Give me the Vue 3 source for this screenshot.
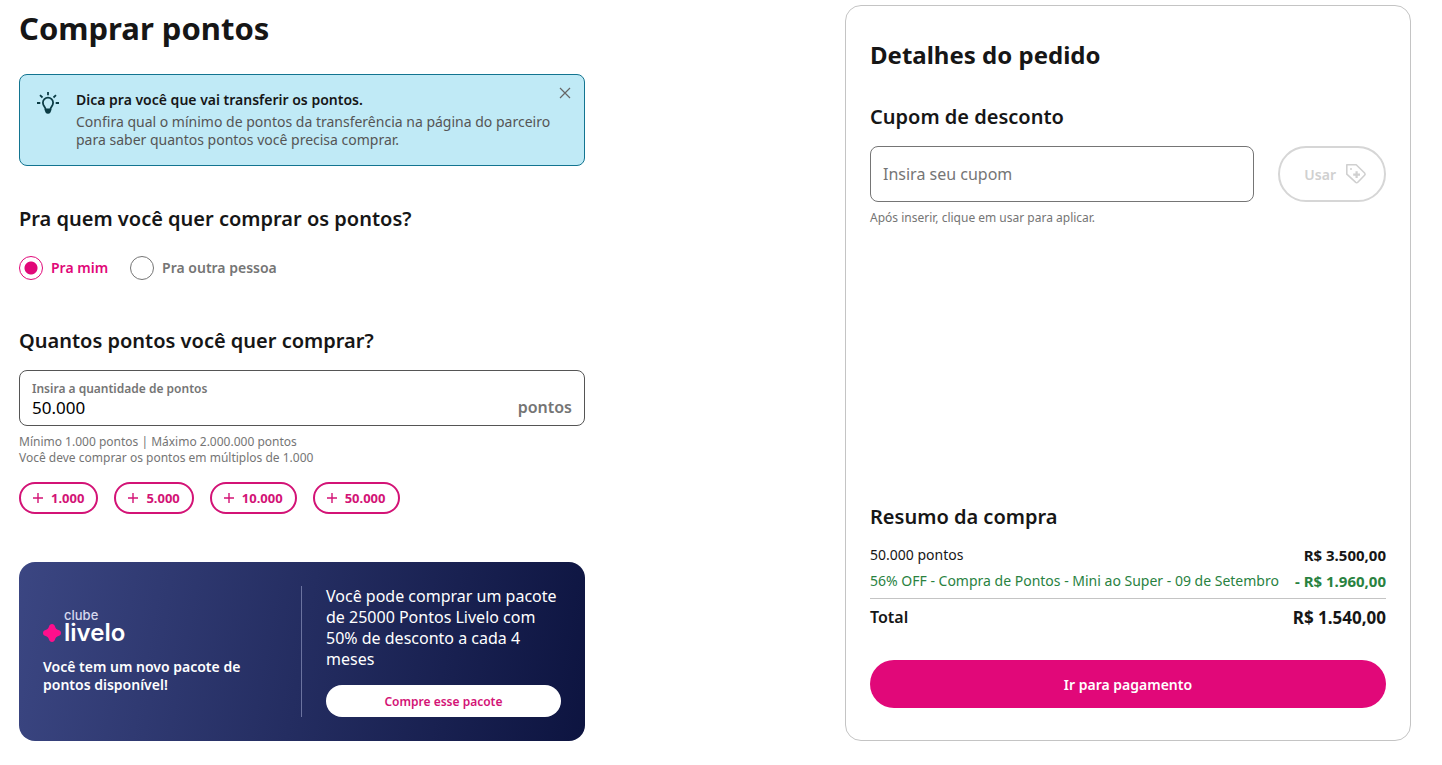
<template>
  <main class="checkout">
    <section class="purchase">
      <h1 class="page-title">Comprar pontos</h1>

      <div v-if="showTip" class="tip" role="note">
        <svg class="tip-icon" width="24" height="24" viewBox="0 0 24 24" fill="none" stroke="currentColor" stroke-width="1.8">
          <path d="M12 1v3.200M4 4.200l2.500 2.300M20 4.200l-2.500 2.300M1 12h3.300M19.700 12H23"/>
          <path d="M9.600 18.400c0-2-2.700-3.600-2.700-6.700a5.100 5.100 0 0 1 10.200 0c0 3.100-2.700 4.700-2.700 6.700z"/>
          <path d="M8.700 18h6.600c0 3-1.200 4.800-3.300 4.800s-3.300-1.800-3.300-4.800z" fill="currentColor" stroke="none"/>
        </svg>
        <div class="tip-text">
          <strong>Dica pra você que vai transferir os pontos.</strong>
          <p>Confira qual o mínimo de pontos da transferência na página do parceiro para saber quantos pontos você precisa comprar.</p>
        </div>
        <button type="button" class="tip-close" aria-label="Fechar" @click="showTip = false">
          <svg width="12" height="12" viewBox="0 0 12 12" fill="none" stroke="currentColor" stroke-width="1.2">
            <path d="M1 1l10 10M11 1L1 11"/>
          </svg>
        </button>
      </div>

      <h2 id="recipient-title" class="section-title recipient-title">Pra quem você quer comprar os pontos?</h2>
      <div class="radios" role="radiogroup" aria-labelledby="recipient-title">
        <label v-for="option in recipients" :key="option.value" class="radio" :class="{ 'selected': recipient === option.value }">
          <input v-model="recipient" type="radio" name="recipient" :value="option.value">
          {{ option.label }}
        </label>
      </div>

      <h2 class="section-title amount-title">Quantos pontos você quer comprar?</h2>
      <div class="amount-field">
        <div class="amount-main">
          <label for="amount">Insira a quantidade de pontos</label>
          <input id="amount" type="text" inputmode="numeric" :value="format(points)" @change="updatePoints">
        </div>
        <span class="amount-unit">pontos</span>
      </div>
      <p class="hint">
        Mínimo 1.000 pontos | Máximo 2.000.000 pontos<br>
        Você deve comprar os pontos em múltiplos de 1.000
      </p>

      <div class="chips">
        <button v-for="step in steps" :key="step" type="button" class="chip" @click="addPoints(step)">
          <svg width="10" height="10" viewBox="0 0 10 10" fill="none" stroke="currentColor" stroke-width="1.4">
            <path d="M5 0v10M0 5h10"/>
          </svg>
          {{ format(step) }}
        </button>
      </div>

      <div class="club">
        <div class="club-brand">
          <div class="logo">
            <svg width="18" height="20" viewBox="0 0 18 18" fill="#ff0f8c">
              <path d="M9 0c1.600 0 2.600.9 3 2.500.5 1.900 1.600 3 3.500 3.500C17.100 6.400 18 7.400 18 9s-.9 2.600-2.500 3c-1.900.5-3 1.600-3.500 3.500-.4 1.600-1.400 2.500-3 2.500s-2.600-.9-3-2.500C5.500 13.600 4.400 12.500 2.500 12 .9 11.600 0 10.600 0 9s.9-2.600 2.500-3C4.400 5.500 5.500 4.400 6 2.500 6.400.9 7.400 0 9 0z"/>
            </svg>
            <div class="logo-text">
              <span class="logo-club">clube</span>
              <span class="logo-name">livelo</span>
            </div>
          </div>
          <p>Você tem um novo pacote de pontos disponível!</p>
        </div>
        <div class="club-offer">
          <p>Você pode comprar um pacote de 25000 Pontos Livelo com 50% de desconto a cada 4 meses</p>
          <button type="button">Compre esse pacote</button>
        </div>
      </div>
    </section>

    <aside class="order">
      <h2 class="order-title">Detalhes do pedido</h2>

      <h3 class="section-title coupon-title"><label for="coupon">Cupom de desconto</label></h3>
      <form class="coupon" @submit.prevent>
        <input id="coupon" v-model="coupon" type="text" placeholder="Insira seu cupom">
        <button type="submit" :disabled="!coupon">
          Usar
          <svg width="24" height="24" viewBox="0 0 24 24" fill="none" stroke="currentColor" stroke-width="1.6" stroke-linejoin="round">
            <path d="M2.800 2.800h9.400l8.400 8.200a1.600 1.600 0 0 1 0 2.200l-6.800 7a1.600 1.600 0 0 1-2.300 0l-8.700-8z"/>
            <path d="M12.600 9.200v6.800M9.200 12.600h6.800" stroke-width="2.2"/>
            <circle cx="7" cy="7" r="1" fill="currentColor" stroke="none"/>
          </svg>
        </button>
      </form>
      <p class="hint">Após inserir, clique em usar para aplicar.</p>

      <div class="summary">
        <h3 class="section-title">Resumo da compra</h3>
        <dl>
          <div class="line">
            <dt>{{ format(points) }} pontos</dt>
            <dd>{{ money(subtotal) }}</dd>
          </div>
          <div class="line discount">
            <dt>56% OFF - Compra de Pontos - Mini ao Super - 09 de Setembro</dt>
            <dd>- {{ money(discount) }}</dd>
          </div>
          <div class="line total">
            <dt>Total</dt>
            <dd>{{ money(subtotal - discount) }}</dd>
          </div>
        </dl>
        <button type="button" class="pay">Ir para pagamento</button>
      </div>
    </aside>
  </main>
</template>

<script setup>
import { ref, computed } from 'vue'

const MIN_POINTS = 1000
const MAX_POINTS = 2000000

const showTip = ref(true)
const recipient = ref('me')
const points = ref(50000)
const coupon = ref('')

const recipients = [
  { value: 'me', label: 'Pra mim' },
  { value: 'other', label: 'Pra outra pessoa' }
]
const steps = [1000, 5000, 10000, 50000]

// R$ 70,00 for every 1.000 points
const subtotal = computed(() => points.value * 0.07)
const discount = computed(() => subtotal.value * 0.56)

const format = (value) => String(value).replace(/\B(?=(\d{3})+$)/g, '.')

const money = (value) => {
  const [whole, cents] = value.toFixed(2).split('.')
  return `R$ ${format(whole)},${cents}`
}

const setPoints = (value) => {
  points.value = Math.min(MAX_POINTS, Math.max(MIN_POINTS, value))
}

const addPoints = (step) => setPoints(points.value + step)

const updatePoints = (event) => {
  const value = Number(event.target.value.replace(/\D/g, ''))
  setPoints(Math.round(value / 1000) * 1000)
  event.target.value = format(points.value)
}
</script>

<style>
body {
  margin: 0;
  background: #fff;
}
</style>

<style scoped>
.checkout {
  display: grid;
  grid-template-columns: 1fr 1fr;
  column-gap: 260px;
  padding: 5px 31px 24px 19px;
  font-family: "Noto Sans", "Open Sans", sans-serif;
  color: #161616;
}

h1, h2, h3, p, dl, dd {
  margin: 0;
}

button, input {
  font-family: inherit;
  box-sizing: border-box;
}

button {
  cursor: pointer;
}

.purchase {
  padding-top: 3px;
}

.page-title {
  font-size: 31px;
  line-height: 40px;
  font-weight: 700;
}

.section-title {
  font-size: 20px;
  line-height: 26px;
  font-weight: 600;
}

/* Dica */
.tip {
  display: flex;
  align-items: flex-start;
  margin-top: 26px;
  padding: 16px 13px 16px 16px;
  border: 1px solid #127490;
  border-radius: 8px;
  background: #c0eaf6;
}

.tip-icon {
  flex: none;
  color: #0b3c45;
}

.tip-text {
  flex: 1;
  margin-left: 16px;
  font-size: 14px;
  line-height: 18px;
}

.tip-text strong {
  display: block;
  font-weight: 600;
}

.tip-text p {
  margin-top: 4px;
  color: #555;
}

.tip-close {
  display: flex;
  margin-top: -4px;
  padding: 0;
  border: none;
  background: none;
  color: #666;
}

/* Destinatário */
.recipient-title {
  margin-top: 40px;
}

.radios {
  display: flex;
  gap: 22px;
  margin-top: 24px;
}

.radio {
  display: flex;
  align-items: center;
  gap: 8px;
  font-size: 14px;
  line-height: 24px;
  font-weight: 600;
  color: #757575;
  cursor: pointer;
}

.radio input {
  appearance: none;
  width: 24px;
  height: 24px;
  margin: 0;
  border: 1px solid #757575;
  border-radius: 50%;
  background: #fff;
}

.radio.selected {
  color: #e10879;
}

.radio.selected input {
  border-color: #e10879;
  background: radial-gradient(circle, #e10879 6px, #fff 7px);
}

/* Quantidade */
.amount-title {
  margin-top: 48px;
}

.amount-field {
  display: flex;
  align-items: flex-end;
  box-sizing: border-box;
  height: 56px;
  margin-top: 16px;
  padding: 8px 12px;
  border: 1px solid #555;
  border-radius: 8px;
}

.amount-main {
  flex: 1;
  display: flex;
  flex-direction: column;
}

.amount-main label {
  font-size: 12px;
  line-height: 16px;
  font-weight: 600;
  color: #757575;
}

.amount-main input {
  width: 100%;
  height: 20px;
  padding: 0;
  border: none;
  outline: none;
  background: none;
  font-size: 17px;
  color: #000;
}

.amount-unit {
  font-size: 16px;
  line-height: 20px;
  font-weight: 600;
  color: #757575;
}

.hint {
  margin-top: 8px;
  font-size: 12px;
  line-height: 16px;
  color: #757575;
}

.chips {
  display: flex;
  gap: 16px;
  margin-top: 16px;
}

.chip {
  display: flex;
  align-items: center;
  gap: 8px;
  height: 32px;
  padding: 0 12px;
  border: 2px solid #d31376;
  border-radius: 16px;
  background: #fff;
  font-size: 13px;
  font-weight: 700;
  color: #d31376;
}

/* Clube */
.club {
  display: grid;
  grid-template-columns: 1fr 1fr;
  margin-top: 48px;
  padding: 24px;
  border-radius: 16px;
  background: linear-gradient(100deg, #3b4682, #0d1440);
  color: #fff;
}

.club-brand {
  display: flex;
  flex-direction: column;
  justify-content: center;
  padding-right: 24px;
  border-right: 1px solid #6b739f;
}

.logo {
  display: flex;
  align-items: flex-end;
  gap: 3px;
}

.logo-text {
  display: flex;
  flex-direction: column;
  gap: 3px;
  font-family: Inter, sans-serif;
}

.logo-club {
  font-size: 13px;
  line-height: 10px;
  font-weight: 500;
  color: #d5d8ee;
}

.logo-name {
  font-size: 24px;
  line-height: 20px;
  font-weight: 600;
}

.club-brand p {
  margin-top: 15px;
  font-size: 14px;
  line-height: 18px;
  font-weight: 600;
}

.club-offer {
  padding-left: 24px;
}

.club-offer p {
  font-size: 16px;
  line-height: 21px;
}

.club-offer button {
  width: 100%;
  height: 32px;
  margin-top: 15px;
  border: none;
  border-radius: 16px;
  background: #fff;
  font-size: 12px;
  font-weight: 600;
  color: #d31376;
}

/* Pedido */
.order {
  display: flex;
  flex-direction: column;
  padding: 32px 24px;
  border: 1px solid #c4c4c4;
  border-radius: 16px;
}

.order-title {
  font-size: 24px;
  line-height: 34px;
  font-weight: 700;
}

.coupon-title {
  margin-top: 32px;
}

.coupon {
  display: flex;
  gap: 24px;
  margin-top: 16px;
}

.coupon input {
  flex: 1;
  min-width: 0;
  height: 56px;
  padding: 0 12px;
  border: 1px solid #757575;
  border-radius: 8px;
  font-size: 16px;
  color: #161616;
}

.coupon input::placeholder {
  color: #757575;
  opacity: 1;
}

.coupon button {
  display: flex;
  align-items: center;
  gap: 8px;
  height: 56px;
  padding: 0 16px 0 24px;
  border: 2px solid #e10879;
  border-radius: 28px;
  background: #fff;
  font-size: 14px;
  font-weight: 600;
  color: #e10879;
}

.coupon button:disabled {
  border-color: #d6d6d6;
  color: #d0d0d0;
  cursor: default;
}

.summary {
  margin-top: auto;
}

.line {
  display: flex;
  justify-content: space-between;
  gap: 8px;
  margin-top: 8px;
  font-size: 14px;
  line-height: 18px;
}

.line:first-child {
  margin-top: 16px;
}

.line dd {
  flex: none;
  font-size: 15px;
  font-weight: 700;
}

.line.discount {
  color: #29823f;
}

.line.total {
  padding-top: 8px;
  border-top: 1px solid #c4c4c4;
  font-size: 16px;
  line-height: 21px;
  font-weight: 600;
}

.line.total dd {
  font-size: 17px;
}

.pay {
  width: 100%;
  height: 48px;
  margin-top: 32px;
  border: none;
  border-radius: 24px;
  background: #e10879;
  font-size: 14px;
  font-weight: 600;
  color: #fff;
}
</style>
